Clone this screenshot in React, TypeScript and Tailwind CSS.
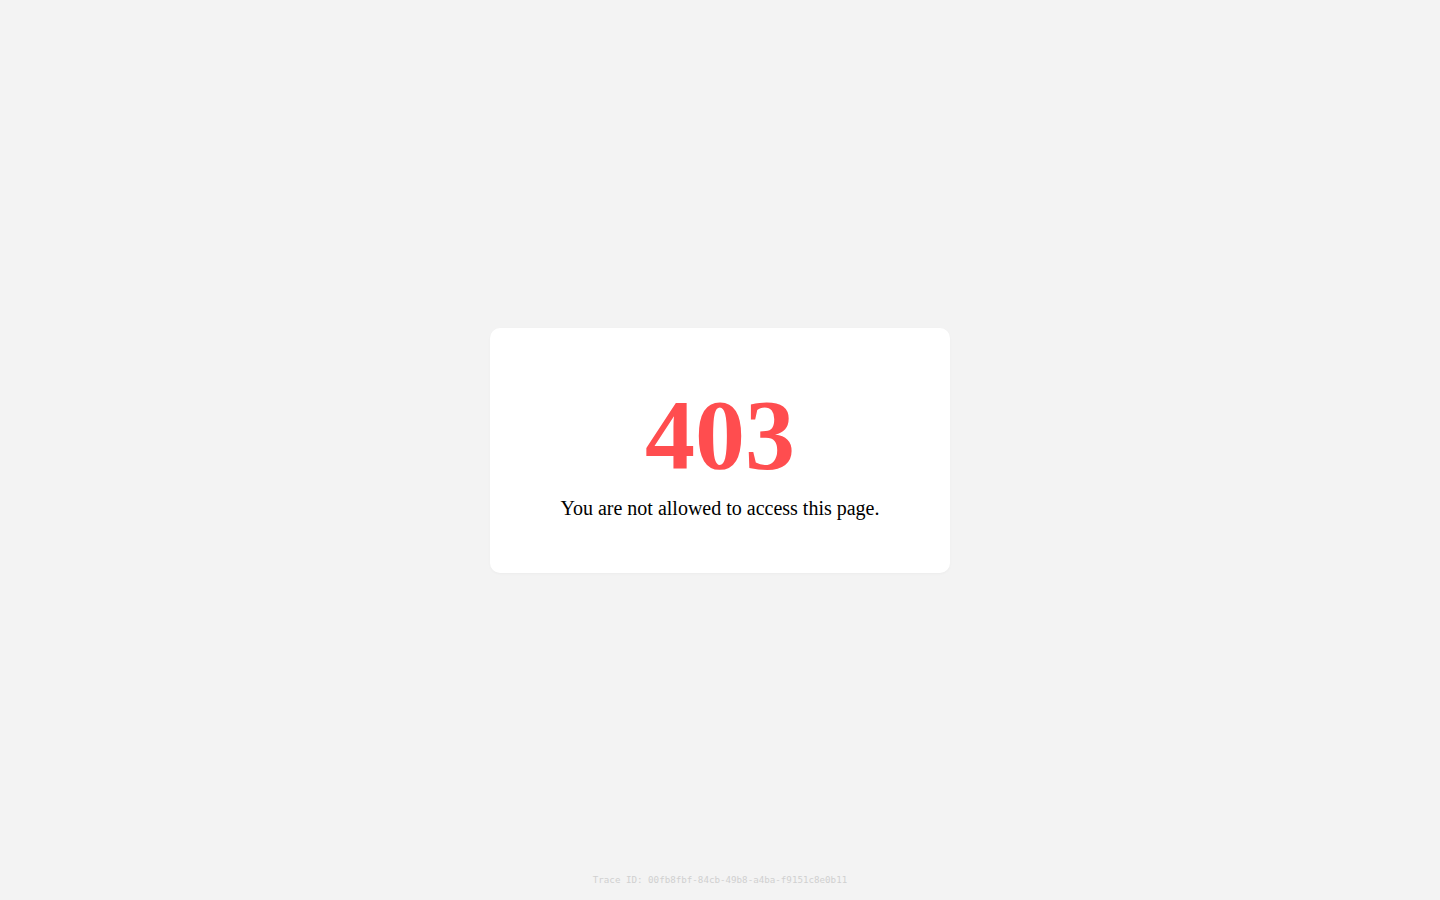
import React from 'react';

const App: React.FC = () => {
  return (
    <div className="relative min-h-screen w-full bg-[#f3f3f3] flex items-center justify-center">
      {/* Card */}
      <div className="w-[460px] h-[245px] bg-white rounded-[10px] shadow-[0_1px_3px_rgba(0,0,0,0.03)] flex flex-col items-center pt-[57px] font-['Liberation_Serif',serif]">
        <h1 className="text-[100px] leading-none font-bold text-[#ff4d4f]">403</h1>
        <p className="mt-[9px] text-[20px] leading-[28px] text-black">You are not allowed to access this page.</p>
      </div>

      {/* Trace footer */}
      <div className="absolute bottom-[14px] left-0 right-0 text-center font-['DejaVu_Sans_Mono',monospace] text-[9.2px] leading-[12px] text-[#d0d0d0]">
        Trace ID: 00fb8fbf-84cb-49b8-a4ba-f9151c8e0b11
      </div>
    </div>
  );
};

export default App;
